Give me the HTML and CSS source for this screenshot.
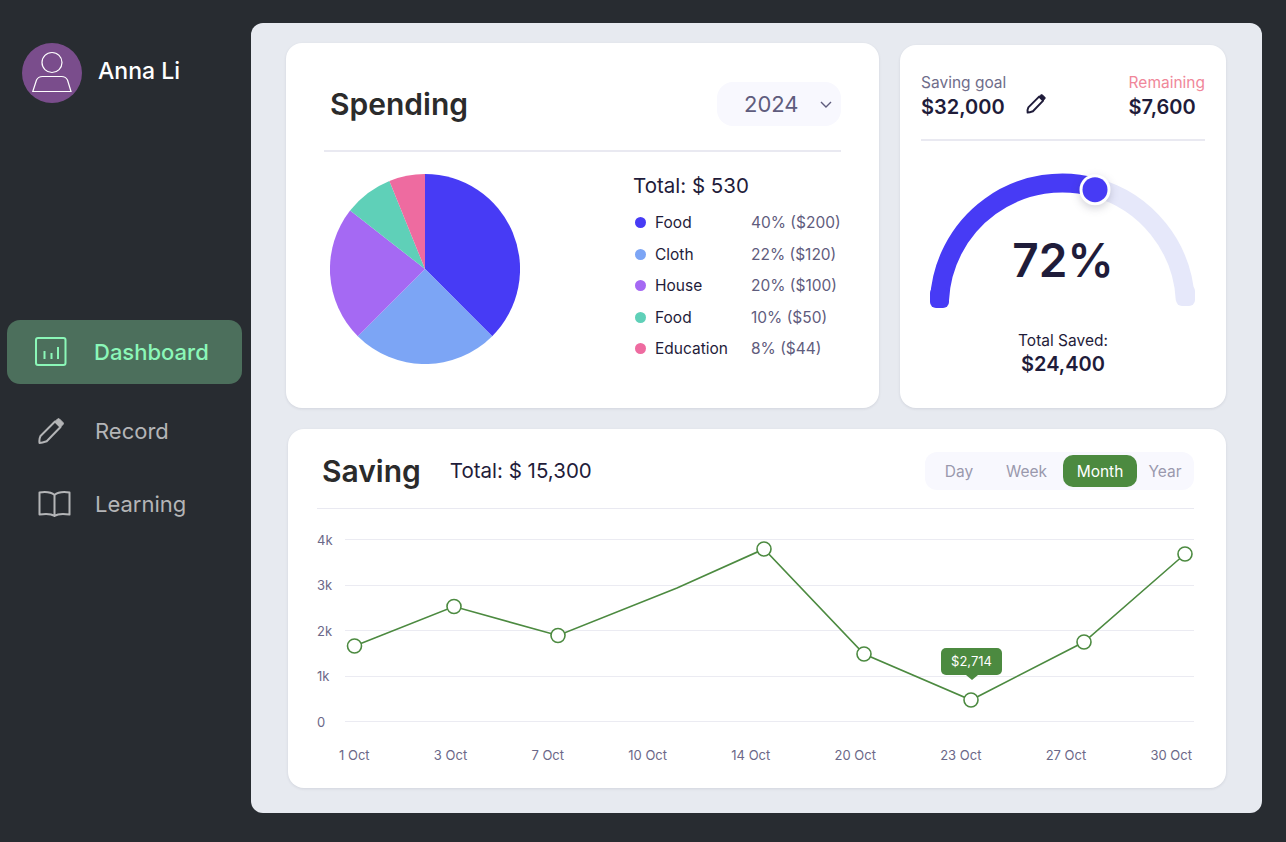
FILE: index.html
```html
<!DOCTYPE html>
<html lang="en">
<head>
<meta charset="utf-8">
<title>Dashboard</title>
<link rel="stylesheet" href="styles.css">
</head>
<body>
<aside class="sidebar">
  <div class="user">
    <div class="avatar">
      <svg width="60" height="60" viewBox="0 0 60 60" fill="none" stroke="#fff" stroke-width="1.2">
        <circle cx="30" cy="19.5" r="10"/>
        <path d="M20.5 33.5 H39.5 C43 33.5 44.5 35 45.5 37 L49 48.5 H10.8 L14.5 37 C15.5 35 17 33.5 20.5 33.5 Z"/>
      </svg>
    </div>
    <span class="user-name">Anna Li</span>
  </div>
  <nav class="nav">
    <a class="nav-item nav-active">
      <span class="nav-icon">
        <svg width="32" height="30" viewBox="0 0 32 30" fill="none" stroke="#8bf7b8" stroke-width="2">
          <rect x="1" y="1" width="29.5" height="27" rx="2"/>
          <path d="M9.5 14V22M16.5 16V22M23 10V22"/>
        </svg>
      </span>
      <span>Dashboard</span>
    </a>
    <a class="nav-item nav-record">
      <span class="nav-icon">
        <svg width="27" height="27" viewBox="0 0 27 27" fill="none" stroke="#b4b5b7" stroke-width="2" stroke-linejoin="round">
          <path d="M17 3.5 L22.5 9 L8.7 23.3 Q4 25 1.5 25 Q1 21 2.5 18 Z"/>
          <path fill="#b4b5b7" stroke-width="1" d="M17 3.5 L19.5 1 Q20.5 .2 21.5 1 L25 4.5 Q26 5.5 25 6.5 L22.5 9 Z"/>
        </svg>
      </span>
      <span>Record</span>
    </a>
    <a class="nav-item nav-learning">
      <span class="nav-icon">
        <svg width="33" height="28" viewBox="0 0 33 28" fill="none" stroke="#b4b5b7" stroke-width="2" stroke-linejoin="round">
          <path d="M16.5 5 C13 2 8 1.5 1.5 2.5 V24.5 C8 23.5 13 23.5 16.5 26 C20 23.5 25 23.5 31.5 24.5 V2.5 C25 1.5 20 2 16.5 5 V26"/>
        </svg>
      </span>
      <span>Learning</span>
    </a>
  </nav>
</aside>

<main class="panel">
  <div class="top-row">
    <section class="card spending">
      <header class="spending-head">
        <h1 class="title spending-title">Spending</h1>
        <div class="select">
          <span>2024</span>
          <svg width="12" height="7" viewBox="0 0 12 7" fill="none" stroke="#5f5c7d" stroke-width="1.4"><path d="M1 1 L6 6 L11 1"/></svg>
        </div>
      </header>
      <div class="spending-body">
        <svg class="pie" width="190" height="190" viewBox="0 0 190 190">
          <path fill="#473bf5" d="M95 95 V0 A95 95 0 0 1 162.2 162.2 Z"/>
          <path fill="#7ca5f5" d="M95 95 L162.2 162.2 A95 95 0 0 1 27.8 162.2 Z"/>
          <path fill="#a569f3" d="M95 95 L27.8 162.2 A95 95 0 0 1 20.1 36.5 Z"/>
          <path fill="#5fd0b8" d="M95 95 L20.1 36.5 A95 95 0 0 1 59.4 6.9 Z"/>
          <path fill="#ee6ba0" d="M95 95 L59.4 6.9 A95 95 0 0 1 95 0 Z"/>
        </svg>
        <div class="legend">
          <div class="legend-total">Total: $ 530</div>
          <div class="legend-row"><i class="dot dot-food"></i><span class="legend-name">Food</span><span class="legend-value">40% ($200)</span></div>
          <div class="legend-row"><i class="dot dot-cloth"></i><span class="legend-name">Cloth</span><span class="legend-value">22% ($120)</span></div>
          <div class="legend-row"><i class="dot dot-house"></i><span class="legend-name">House</span><span class="legend-value">20% ($100)</span></div>
          <div class="legend-row"><i class="dot dot-teal"></i><span class="legend-name">Food</span><span class="legend-value">10% ($50)</span></div>
          <div class="legend-row"><i class="dot dot-edu"></i><span class="legend-name">Education</span><span class="legend-value">8% ($44)</span></div>
        </div>
      </div>
    </section>

    <section class="card goal">
      <header class="goal-head">
        <div>
          <div class="goal-label">Saving goal</div>
          <div class="goal-amount">$32,000
            <svg class="goal-pencil" width="21" height="20" viewBox="0 0 27 27" fill="none" stroke="#1f1c3a" stroke-width="2.6" stroke-linejoin="round">
              <path d="M17 3.5 L22.5 9 L8.7 23.3 Q4 25 1.5 25 Q1 21 2.5 18 Z"/>
              <path fill="#1f1c3a" stroke-width="1" d="M17 3.5 L19.5 1 Q20.5 .2 21.5 1 L25 4.5 Q26 5.5 25 6.5 L22.5 9 Z"/>
            </svg>
          </div>
        </div>
        <div class="goal-right">
          <div class="goal-label goal-remaining">Remaining</div>
          <div class="goal-amount">$7,600</div>
        </div>
      </header>
      <div class="gauge">
        <svg class="gauge-svg" width="283" height="150" viewBox="0 0 283 150" fill="none">
          <path stroke="#e6e8fa" stroke-width="19" d="M174 25.4 A123 123 0 0 1 264.3 138"/>
          <rect x="255" y="123" width="19" height="21" rx="6" fill="#e6e8fa"/>
          <path stroke="#473bf5" stroke-width="19" d="M18.5 138 A123 123 0 0 1 174 25.4"/>
          <rect x="9" y="125" width="19" height="21" rx="6" fill="#473bf5"/>
          <circle class="gauge-knob" cx="174" cy="27.7" r="15.5" fill="#fff"/>
          <circle cx="174" cy="27.7" r="12.5" fill="#473bf5"/>
        </svg>
        <div class="gauge-value">72%</div>
      </div>
      <div class="saved">
        <div class="saved-label">Total Saved:</div>
        <div class="saved-amount">$24,400</div>
      </div>
    </section>
  </div>

  <section class="card saving">
    <header class="saving-head">
      <h2 class="title saving-title">Saving</h2>
      <span class="saving-total">Total: $ 15,300</span>
      <div class="tabs">
        <span class="tab tab-day">Day</span>
        <span class="tab tab-week">Week</span>
        <span class="tab tab-month">Month</span>
        <span class="tab tab-year">Year</span>
      </div>
    </header>
    <div class="chart">
      <div class="grid-row"><span class="axis-y">4k</span><i class="grid-line"></i></div>
      <div class="grid-row"><span class="axis-y">3k</span><i class="grid-line"></i></div>
      <div class="grid-row"><span class="axis-y">2k</span><i class="grid-line"></i></div>
      <div class="grid-row"><span class="axis-y">1k</span><i class="grid-line"></i></div>
      <div class="grid-row"><span class="axis-y">0</span><i class="grid-line"></i></div>
      <svg class="plot" width="880" height="228" viewBox="0 0 880 228">
        <polyline class="plot-line" points="37.5,129 137,89.5 241,118.5 360,71 447,32 547,137 654,183 767,125 868,37"/>
        <g class="plot-dots">
          <circle cx="37.5" cy="129" r="7"/>
          <circle cx="137" cy="89.5" r="7"/>
          <circle cx="241" cy="118.5" r="7"/>
          <circle cx="447" cy="32" r="7"/>
          <circle cx="547" cy="137" r="7"/>
          <circle cx="654" cy="183" r="7"/>
          <circle cx="767" cy="125" r="7"/>
          <circle cx="868" cy="37" r="7"/>
        </g>
      </svg>
      <div class="tooltip">$2,714</div>
    </div>
    <div class="axis-x">
      <span>1 Oct</span><span>3 Oct</span><span>7 Oct</span><span>10 Oct</span><span>14 Oct</span><span>20 Oct</span><span>23 Oct</span><span>27 Oct</span><span>30 Oct</span>
    </div>
  </section>
</main>
</body>
</html>
```

FILE: styles.css
```css
* { box-sizing: border-box; }
html, body { margin: 0; height: 100%; }
body {
  display: flex;
  height: 842px;
  overflow: hidden;
  background: #282c31;
  font-family: Inter, "Liberation Sans", sans-serif;
  color: #1f1c3a;
}

/* Sidebar */
.sidebar { width: 251px; flex: none; padding-top: 43px; }
.user { display: flex; align-items: center; padding-left: 22px; }
.avatar { width: 60px; height: 60px; border-radius: 50%; background: #7a4d8c; }
.avatar svg { display: block; }
.user-name { margin: -4px 0 0 16px; font-size: 23px; font-weight: 500; color: #fff; }
.nav { display: flex; flex-direction: column; margin: 217px 0 0 7px; width: 235px; }
.nav-item { display: flex; align-items: center; font-size: 22px; color: #b4b5b7; }
.nav-icon { display: flex; width: 88px; flex: none; padding-left: 28px; }
.nav-active { height: 64px; border-radius: 13px; background: #4c6f5c; color: #8bf7b8; font-weight: 500; }
.nav-active .nav-icon { width: 87px; }
.nav-record { margin-top: 27px; height: 40px; }
.nav-record .nav-icon { padding-left: 31px; }
.nav-learning { margin-top: 33px; height: 40px; }
.nav-learning .nav-icon { padding-left: 31px; }

/* Panel */
.panel {
  width: 1011px;
  height: 790px;
  margin-top: 23px;
  padding: 20px 0 0 35px;
  border-radius: 12px;
  background: #e7eaf0;
}
.top-row { display: flex; align-items: flex-start; gap: 21px; }
.card { background: #fff; border-radius: 16px; box-shadow: 0 1px 3px rgba(30, 30, 60, .1); }
.title { margin: 0; font-size: 30px; font-weight: 600; color: #2b2b2b; }

/* Spending */
.spending { width: 593px; height: 365px; padding: 39px 38px 0; }
.spending-head {
  display: flex;
  align-items: center;
  justify-content: space-between;
  padding-bottom: 24px;
  border-bottom: 2px solid #e9e9f1;
}
.spending-title { margin-left: 6px; }
.select {
  display: flex;
  align-items: center;
  width: 124px;
  height: 44px;
  padding-left: 27px;
  border-radius: 16px;
  background: #f8f8fe;
  font-size: 22px;
  color: #5f5c7d;
}
.select svg { margin-left: 21px; }
.spending-body { display: flex; padding: 22px 0 0 6px; }
.pie { display: block; flex: none; }
.legend { margin-left: 113px; }
.legend-total { height: 24px; line-height: 24px; font-size: 20.5px; font-weight: 400; color: #1f1c3a; }
.legend-row { display: flex; align-items: center; height: 31.5px; font-size: 15.5px; }
.legend-total + .legend-row { margin-top: 9px; }
.dot { width: 11px; height: 11px; margin-left: 2px; border-radius: 50%; flex: none; }
.dot-food { background: #473bf5; }
.dot-cloth { background: #7ca5f5; }
.dot-house { background: #a569f3; }
.dot-teal { background: #5fd0b8; }
.dot-edu { background: #ee6ba0; }
.legend-name { width: 96px; margin-left: 9px; color: #1f1c3a; }
.legend-value { color: #5f5c7d; white-space: nowrap; }

/* Goal */
.goal { width: 326px; height: 363px; margin-top: 2px; padding: 28px 21px 0; }
.goal-head {
  display: flex;
  justify-content: space-between;
  padding-bottom: 18px;
  border-bottom: 2px solid #e9e9f1;
}
.goal-right { text-align: right; }
.goal-label { height: 19px; line-height: 19px; font-size: 15.5px; color: #6f6d8a; }
.goal-remaining { color: #f0879a; }
.goal-amount { display: flex; align-items: center; height: 28px; line-height: 28px; margin-top: 1px; font-size: 20px; font-weight: 600; color: #1f1c3a; }
.goal-pencil { margin-left: 21px; margin-top: -6px; }
.gauge { position: relative; height: 150px; margin-top: 21px; }
.gauge-svg { display: block; overflow: visible; }
.gauge-knob { filter: drop-shadow(0 3px 4px rgba(30, 30, 60, .2)); }
.gauge-value {
  position: absolute;
  left: 0;
  right: 0;
  top: 70px;
  text-align: center;
  font-size: 46px;
  line-height: 56px;
  font-weight: 600;
  color: #1f1c3a;
}
.saved { margin-top: 18px; text-align: center; }
.saved-label { height: 22px; line-height: 22px; font-size: 15.5px; color: #1f1c3a; }
.saved-amount { height: 24px; line-height: 24px; font-size: 20px; font-weight: 600; color: #1f1c3a; }

/* Saving */
.saving { width: 938px; height: 359px; margin: 21px 0 0 2px; padding: 23px 32px 0 29px; }
.saving-head {
  display: flex;
  align-items: center;
  height: 57px;
  padding-bottom: 18px;
  border-bottom: 1px solid #e9e9f1;
}
.saving-title { margin-left: 5px; }
.saving-total { margin: -1px 0 0 29px; font-size: 20.5px; color: #1f1c3a; }
.tabs {
  display: flex;
  align-items: center;
  width: 269px;
  height: 38px;
  margin-left: auto;
  padding-left: 3px;
  border-radius: 12px;
  background: #f8f8fe;
  font-size: 15.5px;
  color: #9a98ad;
}
.tab { display: flex; align-items: center; justify-content: center; height: 32px; }
.tab-day { width: 62px; }
.tab-week { width: 73px; }
.tab-month { width: 74px; border-radius: 10px; background: #4c8a40; color: #fff; }
.tab-year { width: 56px; }

.chart { position: relative; margin-top: 8px; }
.grid-row { display: flex; align-items: center; height: 45.5px; }
.axis-y { width: 28px; flex: none; font-size: 13px; color: #6b6888; }
.grid-line { flex: 1; height: 1px; background: #ebebf2; }
.plot { position: absolute; left: 0; top: 0; overflow: visible; }
.plot-line { fill: none; stroke: #4c8a40; stroke-width: 1.6; }
.plot-dots circle { fill: #fff; stroke: #4c8a40; stroke-width: 1.6; }
.tooltip {
  position: absolute;
  left: 624px;
  top: 131px;
  width: 61px;
  height: 27px;
  border-radius: 5px;
  background: #4c8a40;
  color: #fff;
  font-size: 13px;
  line-height: 27px;
  text-align: center;
}
.tooltip::after {
  content: "";
  position: absolute;
  left: 50%;
  bottom: -5px;
  margin-left: -6px;
  border-left: 6px solid transparent;
  border-right: 6px solid transparent;
  border-top: 5px solid #4c8a40;
}
.axis-x {
  display: flex;
  justify-content: space-between;
  margin: 1px 2px 0 22px;
  font-size: 13px;
  line-height: 18px;
  color: #6b6888;
}
```
